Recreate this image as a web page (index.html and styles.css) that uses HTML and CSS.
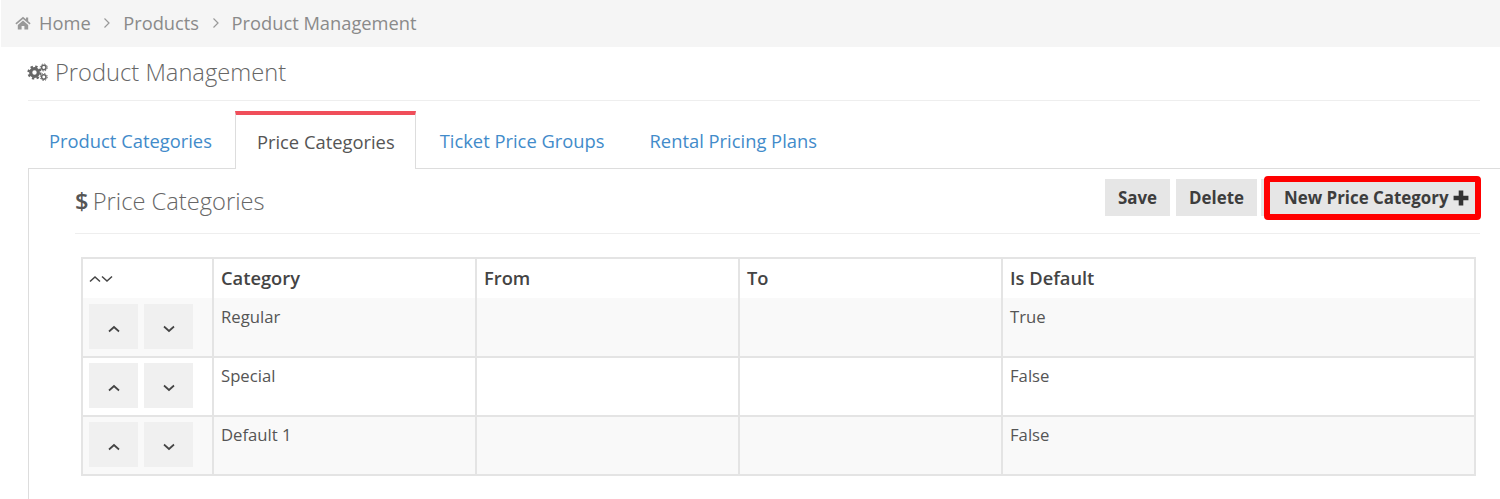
FILE: index.html
```html
<!DOCTYPE html>
<html lang="en">
<head>
<meta charset="utf-8">
<title>Product Management</title>
<link rel="stylesheet" href="styles.css">
</head>
<body>
<nav class="crumbs">
  <svg class="home" viewBox="0 0 16 14" width="16" height="14"><path d="M8 .8 L.4 7.300 L1.400 8.500 L8 2.900 L14.600 8.500 L15.600 7.300 L13.200 5.200 V1.400 H11 V3.300 Z M2.800 8.900 V13.600 H6.600 V10 H9.400 V13.600 H13.200 V8.900 L8 4.400 Z"/></svg>
  <span>Home</span>
  <svg class="sep" viewBox="0 0 8 12" width="8" height="12"><path d="M1.500 1.500 L6 6 L1.500 10.500"/></svg>
  <span>Products</span>
  <svg class="sep" viewBox="0 0 8 12" width="8" height="12"><path d="M1.500 1.500 L6 6 L1.500 10.500"/></svg>
  <span>Product Management</span>
</nav>
<main class="page">
  <h1 class="title">
    <svg class="gears" viewBox="0 0 21 18" width="21" height="18">
      <circle class="gear-body" cx="7.500" cy="9.500" r="3.800"/>
      <circle class="gear-teeth" cx="7.500" cy="9.500" r="6"/>
      <circle class="cog-body" cx="16.800" cy="4.500" r="2.200"/>
      <circle class="cog-teeth" cx="16.800" cy="4.500" r="3.500"/>
      <circle class="cog-body" cx="16.800" cy="14" r="2.200"/>
      <circle class="cog-teeth" cx="16.800" cy="14" r="3.500"/>
    </svg>
    <span>Product Management</span>
  </h1>
  <div class="tabs">
    <a class="tab">Product Categories</a>
    <a class="tab active">Price Categories</a>
    <a class="tab">Ticket Price Groups</a>
    <a class="tab">Rental Pricing Plans</a>
  </div>
  <section class="panel">
    <header class="panel-head">
      <h2 class="panel-title"><b>$</b> Price Categories</h2>
      <div class="actions">
        <button class="btn">Save</button>
        <button class="btn">Delete</button>
        <button class="btn new">New Price Category<svg class="plus" viewBox="0 0 14 14" width="16" height="16"><path d="M5 .5 H9 V5 H13.500 V9 H9 V13.500 H5 V9 H.5 V5 H5 Z"/></svg><span class="highlight"></span></button>
      </div>
    </header>
    <table class="grid">
      <thead>
        <tr>
          <th class="c-order"><span class="mini"><svg viewBox="0 0 12 8" width="12" height="8"><path d="M1 6.500 L6 2 L11 6.500"/></svg><svg viewBox="0 0 12 8" width="12" height="8"><path d="M1 1.500 L6 6 L11 1.500"/></svg></span></th>
          <th class="c-cat">Category</th>
          <th class="c-from">From</th>
          <th class="c-to">To</th>
          <th>Is Default</th>
        </tr>
      </thead>
      <tbody>
        <tr>
          <td class="order"><span class="moves"><button class="move"><svg viewBox="0 0 12 8" width="12" height="8"><path d="M1 6.500 L6 2 L11 6.500"/></svg></button><button class="move"><svg viewBox="0 0 12 8" width="12" height="8"><path d="M1 1.500 L6 6 L11 1.500"/></svg></button></span></td>
          <td>Regular</td><td></td><td></td><td>True</td>
        </tr>
        <tr>
          <td class="order"><span class="moves"><button class="move"><svg viewBox="0 0 12 8" width="12" height="8"><path d="M1 6.500 L6 2 L11 6.500"/></svg></button><button class="move"><svg viewBox="0 0 12 8" width="12" height="8"><path d="M1 1.500 L6 6 L11 1.500"/></svg></button></span></td>
          <td>Special</td><td></td><td></td><td>False</td>
        </tr>
        <tr>
          <td class="order"><span class="moves"><button class="move"><svg viewBox="0 0 12 8" width="12" height="8"><path d="M1 6.500 L6 2 L11 6.500"/></svg></button><button class="move"><svg viewBox="0 0 12 8" width="12" height="8"><path d="M1 1.500 L6 6 L11 1.500"/></svg></button></span></td>
          <td>Default 1</td><td></td><td></td><td>False</td>
        </tr>
      </tbody>
    </table>
  </section>
</main>
</body>
</html>
```
FILE: styles.css
```css
* { box-sizing: border-box; }
html, body { margin: 0; height: 499px; overflow: hidden; background: #fff; }
body { font-family: "Open Sans", "Liberation Sans", sans-serif; color: #555; padding-left: 1px; }

.crumbs {
  height: 47px;
  background: #f5f5f5;
  display: flex;
  align-items: center;
  padding: 0 0 2px 14px;
  font-size: 18.300px;
  color: #8a8a8a;
}
.home { fill: #999; margin-right: 8px; }
.sep { fill: none; stroke: #999; stroke-width: 1.200; margin: 0 12px 0 12.500px; }

.page { padding: 0 0 0 27px; }
.title {
  margin: 0 20px 0 0;
  height: 54px;
  display: flex;
  align-items: center;
  gap: 7px;
  padding-bottom: 3px;
  font-size: 23.700px;
  font-weight: 300;
  color: #666;
  border-bottom: 1px solid #eee;
}
.gears { margin-left: -1px; }
.gear-body { fill: none; stroke: #666; stroke-width: 3.200; }
.gear-teeth { fill: none; stroke: #666; stroke-width: 2.200; stroke-dasharray: 2.360 2.350; }
.cog-body { fill: none; stroke: #666; stroke-width: 1.500; }
.cog-teeth { fill: none; stroke: #666; stroke-width: 1; stroke-dasharray: 1.370 1.380; }

.tabs {
  display: flex;
  height: 58px;
  margin-top: 10px;
  margin-bottom: -1px;
  margin-left: -1px;
  gap: 1px;
  font-size: 18.350px;
  position: relative;
}
.tab {
  padding: 17px 22px 0;
  color: #428bca;
}
.tab.active {
  background: #fff;
  color: #555;
  border: 1px solid #ddd;
  border-bottom: 0;
  border-top: 4px solid #f04e5a;
  padding: 14px 20px 0 21px;
  margin-right: 1px;
  height: 58px;
  position: relative;
  z-index: 1;
}

.panel {
  border-left: 1px solid #ddd;
  border-top: 1px solid #ddd;
  padding: 0 20px 0 46px;
  height: 331px;
}
.panel-head {
  height: 65px;
  display: flex;
  justify-content: space-between;
  border-bottom: 1px solid #eee;
}
.panel-title {
  margin: 17px 0 0;
  font-size: 23.700px;
  font-weight: 300;
  color: #666;
  line-height: 30px;
}
.panel-title b { font-weight: 600; color: #555; margin-right: -2px; }
.actions { display: flex; gap: 6px; align-items: flex-start; padding-top: 10px; margin-right: 3px; }
.btn {
  height: 37px;
  border: 0;
  background: #e6e6e6;
  font: 700 16.900px "Open Sans", "Liberation Sans", sans-serif;
  color: #3d3d3d;
  padding: 0 13px;
}
.btn.new {
  position: relative;
  margin-left: -2px;
  width: 216px;
  padding: 0 0 0 23px;
  display: flex;
  align-items: center;
  white-space: nowrap;
}
.highlight {
  position: absolute;
  left: 3px;
  top: -3px;
  width: 217px;
  height: 44px;
  border: 6px solid #f00;
  border-radius: 4px;
}
.plus { fill: #333; margin-left: 4px; }

.grid {
  margin: 23px 0 0 6px;
  width: 1395px;
  table-layout: fixed;
  border-collapse: collapse;
  border: 2px solid #e4e4e4;
  font-size: 16.700px;
}
.grid th, .grid td {
  border: 2px solid #e4e4e4;
  text-align: left;
  vertical-align: top;
  padding: 5px 7px;
}
.grid thead th { height: 40px; border-bottom: 0; font-size: 18.300px; font-weight: 600; color: #444; padding-top: 6px; }
.grid tbody td { height: 59px; color: #555; padding-top: 6px; }
.grid tbody tr:nth-child(odd) { background: #f9f9f9; }
.grid tbody tr:first-child td { border-top: 0; padding-top: 7px; }
.c-order { width: 131px; }
.c-cat { width: 263px; }
.c-from { width: 263px; }
.c-to { width: 263px; }
.grid thead .c-order { padding-left: 6px; }
.mini { display: flex; padding-top: 10px; }
.mini svg { fill: none; stroke: #444; stroke-width: 1.500; }
.grid tbody td.order { padding: 5px 0 0 6px; }
.grid tbody tr:first-child td.order { padding-top: 6px; }
.moves { display: flex; gap: 6px; }
.move {
  width: 49px;
  height: 45px;
  border: 0;
  padding: 4px 0 0;
  background: #f0f0f0;
}
.move svg { fill: none; stroke: #444; stroke-width: 1.700; }
```
